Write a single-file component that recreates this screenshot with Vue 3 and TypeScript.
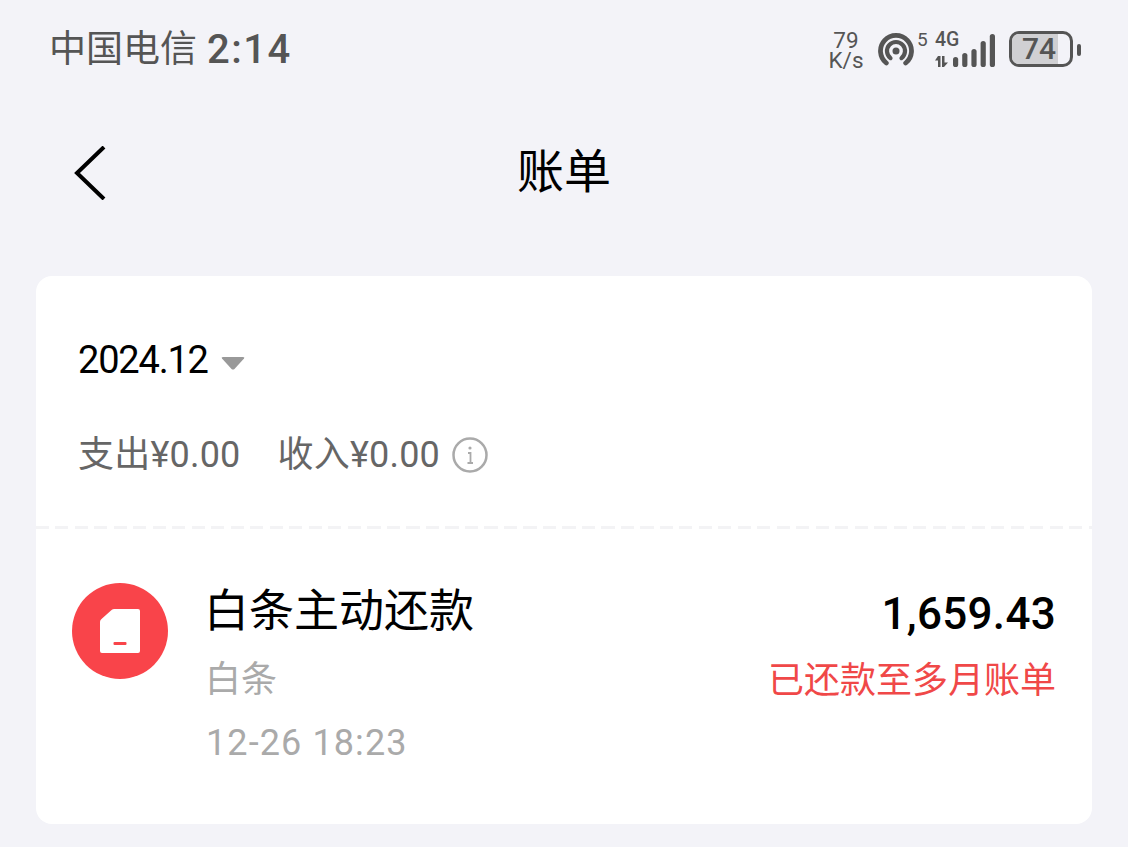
<script setup lang="ts">
// Signal bars, heights read from the status bar
const bars = [
  { x: 0, h: 10 },
  { x: 9.2, h: 14 },
  { x: 18.4, h: 18 },
  { x: 27.6, h: 26 },
  { x: 36.8, h: 33 }
];
</script>

<template>
  <div class="page">
    <div class="status-bar">
      <div class="carrier">
        <span class="carrier-name">中国电信</span>
        <span class="clock">2:14</span>
      </div>
      <div class="status-icons">
        <div class="speed">
          <span>79</span>
          <span>K/s</span>
        </div>
        <svg class="hotspot" width="36" height="36" viewBox="0 0 36 36" fill="none" stroke="#555" stroke-linecap="round">
          <path d="M8.300 30 A15.500 15.500 0 1 1 27.700 30" stroke-width="4.800" />
          <path d="M12.500 25.100 A9 9 0 1 1 23.500 25.100" stroke-width="4.200" />
          <circle cx="18" cy="18" r="3.500" fill="#555" stroke="none" />
        </svg>
        <span class="hotspot-count">5</span>
        <div class="network">
          <span class="net-label">4G</span>
          <svg width="14" height="11" viewBox="0 0 14 11" fill="#555">
            <path d="M0 4.500 L3 0 H5.500 V11 H3 V4.500 Z" />
            <path d="M7 0 H9.500 V6.500 H13 L9 11 H7 Z" />
          </svg>
        </div>
        <svg class="signal" width="42" height="34" viewBox="0 0 42 34" fill="#555">
          <rect v-for="b in bars" :key="b.x" :x="b.x" :y="34 - b.h" width="5.200" :height="b.h" rx="2.600" />
        </svg>
        <div class="battery">
          <div class="battery-fill"></div>
          <span class="battery-level">74</span>
        </div>
        <div class="battery-nub"></div>
      </div>
    </div>

    <div class="nav-bar">
      <svg class="back" width="34" height="54" viewBox="0 0 34 54" fill="none" stroke="#000" stroke-width="4">
        <path d="M30 1 L3 27 L30 53" />
      </svg>
      <h1 class="title">账单</h1>
    </div>

    <div class="card">
      <div class="summary">
        <div class="month">
          <span>2024.12</span>
          <svg class="caret" width="24" height="13" viewBox="0 0 24 13" fill="#999">
            <path d="M1 1.500 Q0 0 2 0 H22 Q24 0 23 1.500 L13.500 12 Q12 13 10.500 12 Z" />
          </svg>
        </div>
        <div class="totals">
          <span>支出¥0.00</span>
          <span>收入¥0.00</span>
          <svg class="info" width="36" height="36" viewBox="0 0 36 36" fill="none">
            <circle cx="18" cy="18" r="16.500" stroke="#aaa" stroke-width="2.500" />
            <circle cx="18" cy="11" r="1.600" fill="#aaa" />
            <path d="M16 16 H18.500 V26 M15.500 26 H21" stroke="#aaa" stroke-width="1.800" />
          </svg>
        </div>
      </div>
      <div class="divider"></div>

      <div class="record">
        <div class="record-icon">
          <svg width="42" height="44" viewBox="0 0 42 44">
            <path d="M12 1.500 Q13 0 15 0 H39 Q41 0 41 2 V42 Q41 44 39 44 H3 Q1 44 1 42 V13 Q1 11 2.500 10 Z" fill="#fff" />
            <rect x="14.500" y="33" width="13" height="3" rx="1" fill="#f9444a" />
          </svg>
        </div>
        <div class="record-info">
          <div class="record-name">白条主动还款</div>
          <div class="record-source">白条</div>
          <div class="record-time">12-26 18:23</div>
        </div>
        <div class="record-side">
          <div class="record-amount">1,659.43</div>
          <div class="record-note">已还款至多月账单</div>
        </div>
      </div>
    </div>
  </div>
</template>

<style>
html,
body {
  margin: 0;
  background: #f3f3f8;
}
</style>

<style scoped>
.page {
  width: 1128px;
  height: 847px;
  overflow: hidden;
  background: #f3f3f8;
  font-family: Roboto, "Noto Sans CJK SC", sans-serif;
  box-sizing: border-box;
  padding: 0 36px;
}

.status-bar {
  height: 100px;
  display: flex;
  justify-content: space-between;
  align-items: center;
  margin: 0 11px 0 13px;
}

.carrier {
  display: flex;
  align-items: center;
  gap: 10px;
  color: #555;
}

.carrier-name {
  font-size: 37px;
  line-height: 44px;
}

.clock {
  font-size: 40px;
  font-weight: 500;
  line-height: 44px;
  letter-spacing: 1.500px;
}

.status-icons {
  height: 40px;
  display: flex;
  align-items: flex-start;
  color: #555;
}

.speed {
  width: 34px;
  display: flex;
  flex-direction: column;
  align-items: center;
  font-size: 22.500px;
  line-height: 20px;
}

.hotspot {
  margin: 3px 0 0 15px;
}

.hotspot-count {
  font-size: 19px;
  line-height: 19px;
  width: 10px;
  margin-left: 3px;
}

.network {
  display: flex;
  flex-direction: column;
  margin-left: 8px;
  width: 18px;
  gap: 6px;
}

.net-label {
  font-size: 19.500px;
  font-weight: 500;
  line-height: 20px;
  white-space: nowrap;
}

.signal {
  margin-top: 3px;
}

.battery {
  position: relative;
  width: 64px;
  height: 36px;
  margin: 1px 0 0 14px;
  padding-right: 4px;
  border: 3px solid #555;
  border-radius: 10px;
  box-sizing: border-box;
  overflow: hidden;
  display: flex;
  align-items: center;
  justify-content: center;
}

.battery-fill {
  position: absolute;
  left: 0;
  top: 0;
  bottom: 0;
  width: 79%;
  background: #d0d0d3;
}

.battery-level {
  position: relative;
  font-size: 30px;
  font-weight: 500;
  line-height: 30px;
}

.battery-nub {
  width: 4px;
  height: 12px;
  margin: 14px 0 0 4px;
  border-radius: 2px;
  background: #555;
}

.nav-bar {
  position: relative;
  height: 140px;
  box-sizing: border-box;
  padding-bottom: 6px;
  display: flex;
  align-items: center;
  justify-content: center;
}

.back {
  position: absolute;
  left: 38px;
  top: 46px;
}

.title {
  margin: 0;
  font-size: 47px;
  font-weight: 400;
  color: #000;
}

.card {
  margin-top: 36px;
  height: 548px;
  border-radius: 16px;
  background: #fff;
}

.summary {
  height: 250px;
  box-sizing: border-box;
  padding: 62px 42px 0;
}

.divider {
  height: 3px;
  background: repeating-linear-gradient(90deg, #f3f3f5 0 13px, transparent 13px 19.500px);
}

.month {
  display: flex;
  align-items: center;
  gap: 13px;
  font-size: 38px;
  line-height: 44px;
  letter-spacing: -1.200px;
  color: #000;
}

.caret {
  margin-top: 7px;
}

.totals {
  display: flex;
  align-items: center;
  margin-top: 51px;
  font-size: 36px;
  line-height: 44px;
  letter-spacing: 0.200px;
  color: #666;
}

.totals span:first-child {
  margin-right: 37px;
}

.info {
  margin-left: 12px;
}

.record {
  display: flex;
  padding: 54px 36px 0;
}

.record-icon {
  width: 96px;
  height: 96px;
  border-radius: 50%;
  background: #f9444a;
  display: flex;
  align-items: center;
  justify-content: center;
}

.record-info {
  margin-left: 36px;
  flex: 1;
}

.record-name {
  margin-top: 2px;
  font-size: 45px;
  line-height: 54px;
  color: #000;
}

.record-source {
  margin: 19px 0 0 1px;
  font-size: 36px;
  line-height: 44px;
  color: #aaa;
}

.record-time {
  margin: 19px 0 0 2px;
  font-size: 36px;
  line-height: 44px;
  letter-spacing: 1.100px;
  color: #aaa;
}

.record-side {
  text-align: right;
}

.record-amount {
  margin-top: 1px;
  font-size: 44px;
  font-weight: 500;
  line-height: 60px;
  letter-spacing: 0.300px;
  color: #000;
}

.record-note {
  margin-top: 15px;
  font-size: 36px;
  line-height: 44px;
  color: #f04848;
}
</style>
